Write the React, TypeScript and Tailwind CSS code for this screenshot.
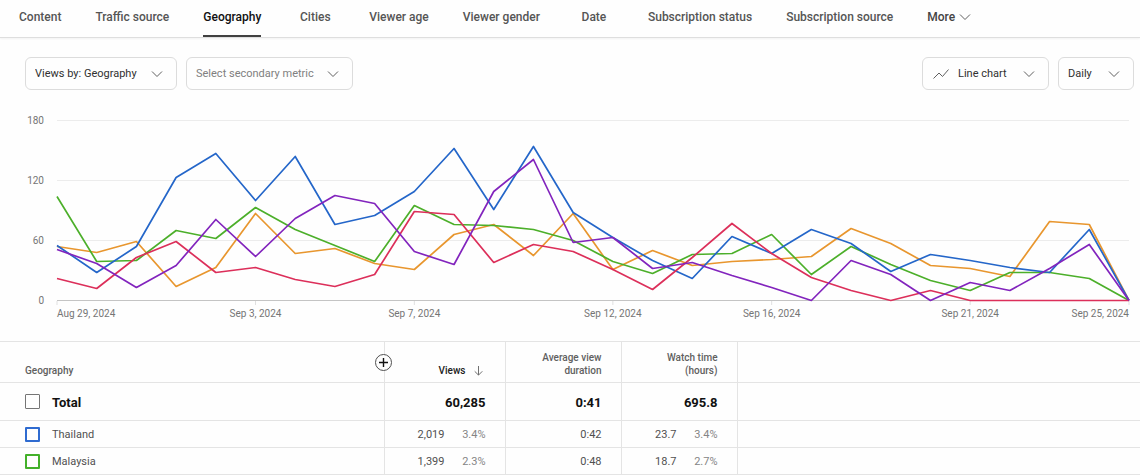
import type { ReactNode } from 'react';
import { clsx } from 'clsx';

const tabs = [
  'Content',
  'Traffic source',
  'Geography',
  'Cities',
  'Viewer age',
  'Viewer gender',
  'Date',
  'Subscription status',
  'Subscription source',
];

const series = [
  {
    name: 'orange',
    color: '#e8962e',
    values: [54, 48, 59, 14, 33, 87, 47, 52, 37, 31, 66, 76, 45, 87, 31, 50, 35, 39, 41, 44, 72, 57, 35, 32, 24, 79, 76, 0],
  },
  {
    name: 'green',
    color: '#4caf2a',
    values: [104, 39, 40, 70, 62, 93, 71, 55, 39, 95, 76, 75, 71, 60, 39, 27, 46, 47, 66, 26, 54, 36, 20, 10, 28, 28, 22, 0],
  },
  {
    name: 'blue',
    color: '#2466c9',
    values: [55, 28, 54, 123, 147, 100, 144, 76, 85, 109, 152, 91, 154, 88, 63, 40, 22, 64, 47, 71, 57, 29, 46, 40, 33, 28, 71, 0],
  },
  {
    name: 'red',
    color: '#dc2f5a',
    values: [22, 12, 43, 59, 28, 33, 21, 14, 26, 89, 86, 38, 56, 49, 31, 11, 43, 77, 47, 23, 10, 0, 10, 0, 0, 0, 0, 0],
  },
  {
    name: 'purple',
    color: '#8224bd',
    values: [51, 37, 13, 35, 81, 44, 82, 105, 97, 49, 36, 109, 141, 58, 63, 32, 38, 25, 13, 0, 40, 26, 0, 18, 10, 32, 56, 0],
  },
];

const DAYS = 27;
const MAX = 180;

const yTicks = [180, 120, 60, 0];
const xTicks = [
  { day: 0, label: 'Aug 29, 2024' },
  { day: 5, label: 'Sep 3, 2024' },
  { day: 9, label: 'Sep 7, 2024' },
  { day: 14, label: 'Sep 12, 2024' },
  { day: 18, label: 'Sep 16, 2024' },
  { day: 23, label: 'Sep 21, 2024' },
  { day: 27, label: 'Sep 25, 2024' },
];

const rows = [
  { name: 'Thailand', box: 'border-[#2f6bd0]', views: '2,019', viewsPct: '3.4%', duration: '0:42', hours: '23.7', hoursPct: '3.4%' },
  { name: 'Malaysia', box: 'border-[#43b02a]', views: '1,399', viewsPct: '2.3%', duration: '0:48', hours: '18.7', hoursPct: '2.7%' },
];

function Chevron({ className }: { className?: string }) {
  return (
    <svg viewBox="0 0 12 8" className={clsx('h-2 w-3', className)} fill="none" stroke="#606060" aria-hidden="true">
      <path d="M1 1.5 6 6.5 11 1.5" />
    </svg>
  );
}

type DropdownProps = {
  label: string;
  value: string;
  className: string;
  icon?: ReactNode;
};

function Dropdown({ label, value, className, icon }: DropdownProps) {
  return (
    <div className="relative flex items-center">
      {icon}
      <select
        aria-label={label}
        defaultValue={value}
        className={clsx('h-[33px] appearance-none rounded-md border border-[#dcdcdc] bg-transparent pt-0.5 text-[11px]', className)}
      >
        <option>{value}</option>
      </select>
      <Chevron className="pointer-events-none absolute right-[14px]" />
    </div>
  );
}

function Chart() {
  return (
    <div className="flex pr-[11px] text-[10px] text-[#757575]">
      <svg className="h-[218px] w-[57px] shrink-0" role="presentation">
        {yTicks.map((t) => (
          <text key={t} x="44" y={MAX - t + 13} textAnchor="end" fill="currentColor">
            {t}
          </text>
        ))}
      </svg>
      <svg className="h-[218px] min-w-0 flex-1 overflow-visible" role="img" aria-label="Daily views by geography">
        {yTicks.map((t) => (
          <line
            key={t}
            x1="0"
            x2="100%"
            y1={MAX - t + 9.5}
            y2={MAX - t + 9.5}
            stroke={t === 0 ? '#c4c4c4' : '#ececec'}
          />
        ))}
        {xTicks.map(({ day, label }) => {
          const x = `${(day / DAYS) * 100}%`;
          const anchor = day === 0 ? 'start' : day === DAYS ? 'end' : 'middle';
          return (
            <g key={day}>
              <line x1={x} x2={x} y1="190" y2="194" stroke="#e0e0e0" />
              <text x={x} y="206" textAnchor={anchor} fill="currentColor">
                {label}
              </text>
            </g>
          );
        })}
        <svg y="9.5" width="100%" height={MAX} viewBox={`0 0 ${DAYS} ${MAX}`} preserveAspectRatio="none" overflow="visible">
          {series.map((s) => (
            <polyline
              key={s.name}
              points={s.values.map((v, i) => `${i},${MAX - v}`).join(' ')}
              fill="none"
              stroke={s.color}
              strokeWidth="1.7"
              strokeLinejoin="round"
              vectorEffect="non-scaling-stroke"
            />
          ))}
        </svg>
      </svg>
    </div>
  );
}

function Check({ label, className }: { label: string; className: string }) {
  return (
    <input
      type="checkbox"
      aria-label={label}
      className={clsx('size-[15px] shrink-0 appearance-none rounded-[1px]', className)}
    />
  );
}

function DataTable() {
  return (
    <table className="w-full table-fixed border-collapse text-right text-[11px] text-[#505050]">
      <colgroup>
        <col className="w-[384px]" />
        <col className="w-[121px]" />
        <col className="w-[116px]" />
        <col className="w-[116px]" />
        <col />
      </colgroup>
      <thead className="text-[10px] leading-[13px] text-[#606060]">
        <tr className="h-[41px] border-y border-[#e4e4e4] align-bottom">
          <th className="relative border-r border-[#e4e4e4] pb-[5px] pl-[25px] text-left font-medium">
            Geography
            <button
              type="button"
              aria-label="Add metric"
              className="absolute top-3 -right-2 flex size-[17px] items-center justify-center rounded-full border border-[#505050] bg-[#fefefe]"
            >
              <svg viewBox="0 0 9 9" className="size-[9px]" stroke="#111" strokeWidth="1.4" aria-hidden="true">
                <path d="M4.5 0v9M0 4.5h9" />
              </svg>
            </button>
          </th>
          <th className="border-r border-[#e4e4e4] pr-[22px] pb-[5px] font-medium text-[#212121]">
            <div className="flex items-center justify-end gap-2">
              Views
              <svg viewBox="0 0 9 10" className="h-2.5 w-[9px]" fill="none" stroke="#707070" aria-hidden="true">
                <path d="M4.5 0v9M.7 5.3 4.5 9.1l3.8-3.8" />
              </svg>
            </div>
          </th>
          <th className="border-r border-[#e4e4e4] pr-[19px] pb-[5px] font-medium">
            Average view
            <br />
            duration
          </th>
          <th className="border-r border-[#e4e4e4] pr-[19px] pb-[5px] font-medium">
            Watch time
            <br />
            (hours)
          </th>
          <th />
        </tr>
      </thead>
      <tbody>
        <tr className="h-[38px] border-b border-[#e4e4e4] text-[13px] font-bold text-[#111]">
          <td className="border-r border-[#e4e4e4] pl-[25px] text-left">
            <div className="flex items-center gap-3">
              <Check label="Total" className="border border-[#757575]" />
              <span className="pt-0.5">Total</span>
            </div>
          </td>
          <td className="border-r border-[#e4e4e4] pt-0.5 pr-[19px]">60,285</td>
          <td className="border-r border-[#e4e4e4] pt-0.5 pr-[19px]">0:41</td>
          <td className="border-r border-[#e4e4e4] pt-0.5 pr-[19px]">695.8</td>
          <td />
        </tr>
        {rows.map((r) => (
          <tr key={r.name} className="h-[27px] border-b border-[#e4e4e4]">
            <td className="border-r border-[#e4e4e4] pl-[25px] text-left">
              <div className="flex items-center gap-3">
                <Check label={r.name} className={clsx('border-2', r.box)} />
                <span className="pt-0.5">{r.name}</span>
              </div>
            </td>
            <td className="border-r border-[#e4e4e4] pt-0.5 pr-[19px]">
              <div className="flex items-center justify-end">
                {r.views}
                <span className="w-[41px] text-[#858585]">{r.viewsPct}</span>
              </div>
            </td>
            <td className="border-r border-[#e4e4e4] pt-0.5 pr-[19px]">{r.duration}</td>
            <td className="border-r border-[#e4e4e4] pt-0.5 pr-[19px]">
              <div className="flex items-center justify-end">
                {r.hours}
                <span className="w-[41px] text-[#858585]">{r.hoursPct}</span>
              </div>
            </td>
            <td />
          </tr>
        ))}
      </tbody>
    </table>
  );
}

export default function App() {
  return (
    <main className="bg-[#fefefe] font-[Roboto,sans-serif] text-[#303030]">
      <nav className="flex h-[38px] gap-[34px] border-b border-[#dedede] pl-[19px] text-xs font-medium whitespace-nowrap text-[#555] shadow-xs">
        {tabs.map((t) => (
          <button
            key={t}
            type="button"
            className={clsx(
              'min-w-10 border-b-2 pb-0.5',
              t === 'Geography' ? 'border-[#404040] text-[#111]' : 'border-transparent',
            )}
          >
            {t}
          </button>
        ))}
        <button type="button" className="flex items-center gap-1 pb-1 text-[#444]">
          More
          <Chevron />
        </button>
      </nav>

      <div className="flex items-center justify-between pt-[19px] pr-1.5 pl-[25px]">
        <div className="flex gap-[9px]">
          <Dropdown label="Primary metric" value="Views by: Geography" className="w-[152px] pl-[9px]" />
          <Dropdown label="Secondary metric" value="Select secondary metric" className="w-[167px] pl-[9px] text-[#808080]" />
        </div>
        <div className="flex gap-[9px]">
          <Dropdown
            label="Chart type"
            value="Line chart"
            className="w-[127px] pl-[35px]"
            icon={
              <svg viewBox="0 0 16 10" className="pointer-events-none absolute left-[11px] h-2.5 w-4" fill="none" stroke="#606060" aria-hidden="true">
                <path d="M.5 9.5 6 4l3.5 3.5L15.5.5" />
              </svg>
            }
          />
          <Dropdown label="Interval" value="Daily" className="w-[76px] pl-[9px]" />
        </div>
      </div>

      <div className="pt-[21px] pb-3">
        <Chart />
      </div>

      <DataTable />
    </main>
  );
}
